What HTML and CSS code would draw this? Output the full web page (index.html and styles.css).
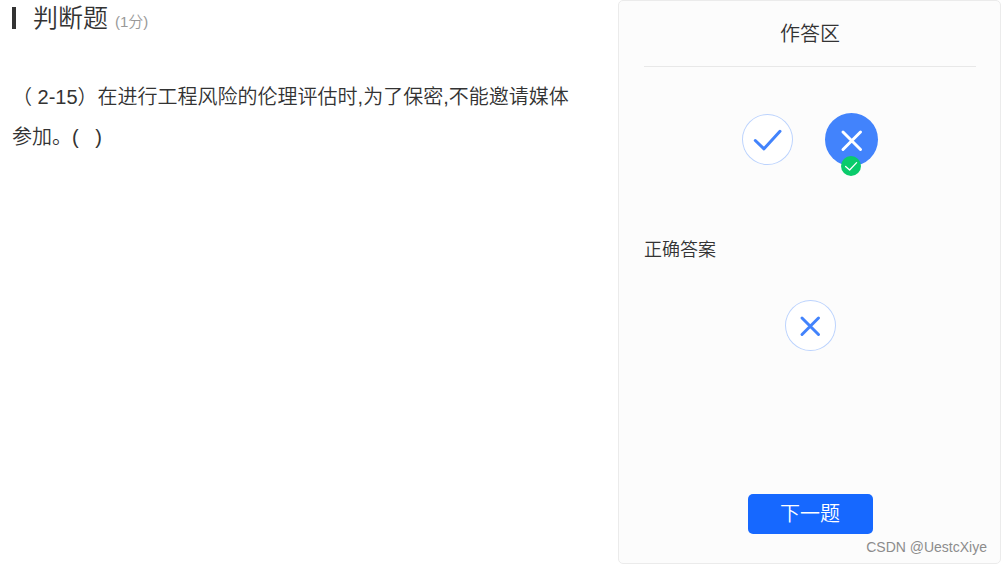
FILE: index.html
```html
<!DOCTYPE html>
<html lang="zh-CN">
<head>
<meta charset="utf-8">
<meta name="viewport" content="width=device-width, initial-scale=1">
<title>判断题</title>
<link rel="stylesheet" href="styles.css">
</head>
<body>
<div class="quiz">
  <main class="question">
    <header class="question-head">
      <h1 class="question-type">判断题</h1>
      <span class="question-score">(1分)</span>
    </header>
    <p class="question-text">（ 2-15）在进行工程风险的伦理评估时,为了保密,不能邀请媒体参加。(&nbsp;&nbsp;&nbsp;)</p>
  </main>
  <aside class="panel">
    <h2 class="panel-title">作答区</h2>
    <div class="choices">
      <button class="choice" type="button" aria-label="正确" aria-pressed="false">
        <svg class="mark" viewBox="0 0 51 51" aria-hidden="true"><path d="M13.3 26.5 22 34.8 38 17.3"/></svg>
      </button>
      <button class="choice choice-selected" type="button" aria-label="错误" aria-pressed="true">
        <svg class="mark" viewBox="0 0 53 53" aria-hidden="true"><path d="M18 19 35.5 36.5M35.5 19 18 36.5"/></svg>
        <svg class="badge" viewBox="0 0 20 20" aria-hidden="true"><circle cx="10" cy="10" r="10"/><path d="M4.6 10.5 8.6 14 15.6 6.6"/></svg>
      </button>
    </div>
    <h3 class="answer-title">正确答案</h3>
    <div class="answer" role="img" aria-label="错误">
      <svg class="mark" viewBox="0 0 51 51" aria-hidden="true"><path d="M17 18 33.5 34.5M33.5 18 17 34.5"/></svg>
    </div>
    <button class="next" type="button">下一题</button>
    <span class="watermark">CSDN @UestcXiye</span>
  </aside>
</div>
</body>
</html>
```
FILE: styles.css
```css
* {
  box-sizing: border-box;
}

body {
  margin: 0;
  background: #fff;
  color: #333;
  font-family: "Liberation Sans", "Noto Sans CJK SC", sans-serif;
  font-weight: 350;
}

h1, h2, h3, p {
  margin: 0;
  font-weight: 350;
}

.quiz {
  display: grid;
  grid-template-columns: minmax(0, 1fr) 383px;
  min-height: 100vh;
  padding-right: 1px;
}

.question {
  padding: 0 30px 0 12px;
}

.question-head {
  display: flex;
  align-items: baseline;
  gap: 7px;
  height: 36px;
  margin-bottom: 41px;
}

.question-head::before {
  content: "";
  align-self: center;
  width: 4px;
  height: 22px;
  margin-right: 10px;
  background: #333;
}

.question-type {
  font-size: 25px;
  line-height: 36px;
}

.question-score {
  color: #999;
  font-size: 15px;
}

.question-text {
  font-size: 20px;
  line-height: 40px;
}

.panel {
  position: relative;
  display: flex;
  flex-direction: column;
  padding: 0 24px 29px 25px;
  border: 1px solid #ebebeb;
  border-radius: 5px;
  background: #fcfcfc;
}

.panel-title {
  padding: 17px 0 16px;
  border-bottom: 1px solid #e8e8e8;
  font-size: 20px;
  line-height: 32px;
  text-align: center;
}

.choices {
  display: flex;
  align-items: center;
  justify-content: center;
  gap: 32px;
  margin-top: 46px;
}

.choice,
.answer {
  position: relative;
  flex: none;
  width: 51px;
  height: 51px;
  padding: 0;
  border: 0;
  border-radius: 50%;
  background: #fff;
  box-shadow: inset 0 0 0 1px #bcd3fd;
  color: #4283fc;
}

.choice {
  cursor: pointer;
}

.choice-selected {
  width: 53px;
  height: 53px;
  background: #4283fc;
  box-shadow: none;
  color: #fff;
}

.mark {
  display: block;
  width: 100%;
  height: 100%;
}

.mark path,
.badge path {
  fill: none;
  stroke: currentColor;
  stroke-width: 3;
  stroke-linecap: round;
  stroke-linejoin: round;
}

.badge {
  position: absolute;
  bottom: -10px;
  left: 16px;
  width: 20px;
  height: 20px;
  fill: #0acb6b;
}

.badge path {
  stroke-width: 1.3;
}

.answer-title {
  margin-top: 71px;
  font-size: 18px;
  line-height: 26px;
}

.answer {
  align-self: center;
  margin-top: 37px;
}

.next {
  align-self: center;
  width: 125px;
  height: 40px;
  margin-top: auto;
  padding: 0;
  border: 0;
  border-radius: 5px;
  background: #1668ff;
  color: #fff;
  font-family: inherit;
  font-size: 20px;
  font-weight: inherit;
  line-height: 40px;
  cursor: pointer;
}

.watermark {
  position: absolute;
  right: 13px;
  bottom: 6px;
  color: #8c8c8c;
  font-size: 14px;
  line-height: 20px;
}
```
